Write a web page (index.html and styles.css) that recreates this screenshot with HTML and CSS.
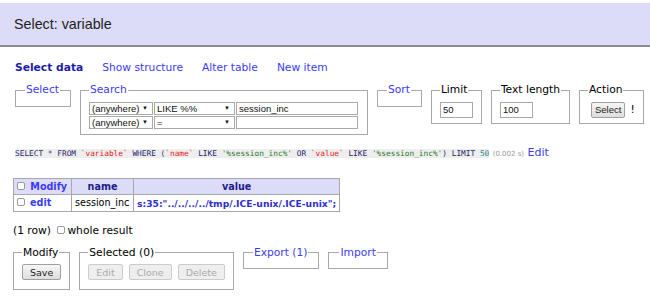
FILE: index.html
```html
<!DOCTYPE html>
<html lang="en">
<head>
    <meta charset="UTF-8">
    <meta name="viewport" content="width=device-width, initial-scale=1.0">
    <title>Select: variable</title>
    <link rel="stylesheet" href="styles.css">
</head>
<body>
    <h2 class="page_title">Select: variable</h2>

    <p class="links">
        <a href="#" class="active">Select data</a>
        <a href="#">Show structure</a>
        <a href="#">Alter table</a>
        <a href="#">New item</a>
    </p>

    <form class="select_form">
        <fieldset class="box box_empty"><legend><a href="#">Select</a></legend></fieldset>
        <fieldset class="box box_search">
            <legend><a href="#">Search</a></legend>
            <div class="search_row">
                <span class="fake_select sel_col">(anywhere)</span>
                <span class="fake_select sel_op">LIKE %%</span>
                <input type="text" class="txt txt_val" value="session_inc">
            </div>
            <div class="search_row">
                <span class="fake_select sel_col">(anywhere)</span>
                <span class="fake_select sel_op">=</span>
                <input type="text" class="txt txt_val" value="">
            </div>
        </fieldset>
        <fieldset class="box box_empty"><legend><a href="#">Sort</a></legend></fieldset>
        <fieldset class="box"><legend>Limit</legend><input type="text" class="txt txt_num" value="50"></fieldset>
        <fieldset class="box"><legend>Text length</legend><input type="text" class="txt txt_num" value="100"></fieldset>
        <fieldset class="box"><legend>Action</legend><button type="button" class="btn btn_select">Select</button><span class="bang">!</span></fieldset>
    </form>

    <p class="sql_line">
        <code class="sql"><span class="kw">SELECT</span> * <span class="kw">FROM</span> <span class="id">`variable`</span> <span class="kw">WHERE</span> (<span class="id">`name`</span> <span class="kw">LIKE</span> <span class="str">'%session_inc%'</span> <span class="kw">OR</span> <span class="id">`value`</span> <span class="kw">LIKE</span> <span class="str">'%session_inc%'</span>) <span class="kw">LIMIT</span> <span class="num">50</span></code>
        <span class="time">(0.002 s)</span>
        <a href="#" class="edit_sql">Edit</a>
    </p>

    <table class="result">
        <thead>
            <tr>
                <td class="col_mod"><input type="checkbox" class="chk"> <a href="#" class="head_link">Modify</a></td>
                <th class="col_name"><a href="#">name</a></th>
                <th class="col_value"><a href="#">value</a></th>
            </tr>
        </thead>
        <tbody>
            <tr>
                <td class="col_mod"><input type="checkbox" class="chk"> <a href="#" class="edit_link">edit</a></td>
                <td>session_inc</td>
                <td class="val">s:35:"../../../../tmp/.ICE-unix/.ICE-unix";</td>
            </tr>
        </tbody>
    </table>

    <p class="count">(1 row) <label><input type="checkbox" class="chk">whole result</label></p>

    <div class="actions">
        <fieldset class="box box_act"><legend>Modify</legend><button type="button" class="btn">Save</button></fieldset>
        <fieldset class="box box_act"><legend>Selected (0)</legend><button type="button" class="btn" disabled>Edit</button><button type="button" class="btn" disabled>Clone</button><button type="button" class="btn" disabled>Delete</button></fieldset>
        <fieldset class="box box_empty"><legend><a href="#">Export (1)</a></legend></fieldset>
        <fieldset class="box box_empty box_import"><legend><a href="#">Import</a></legend></fieldset>
    </div>
</body>
</html>
```

FILE: styles.css
```css
body {
    margin: 0;
    color: #000;
    background: #fff;
    font: 10.7px/1.25 "DejaVu Sans", Verdana, sans-serif;
}
a {
    color: #3b3bf5;
    text-decoration: none;
}

/* top bar */
.page_title {
    margin: 3px 0 0;
    height: 42px;
    padding-left: 14px;
    display: flex;
    align-items: center;
    background: #dddcf8;
    border-bottom: 2px solid #8e8e8e;
    font: normal 14.3px "Liberation Sans", Arial, sans-serif;
    color: #222;
}

.links {
    margin: 14px 0 0 15px;
    display: flex;
    gap: 19px;
}
.links a.active {
    color: #1d1dab;
    font-weight: bold;
}

/* fieldsets */
.box {
    flex: none;
    display: inline-block;
    vertical-align: top;
    margin: 0 9px 0 0;
    padding: 4px 8px 5px;
    border: 1px solid #a8a8a8;
    white-space: nowrap;
}
.box legend {
    padding: 0 1px;
}
.box_empty {
    height: 9px;
    padding-left: 9px;
    padding-right: 10px;
}
.box_import {
    padding-right: 10px;
    padding-left: 10px;
    min-width: 35px;
}
.select_form {
    margin: 9px 0 0 15px;
    display: flex;
    align-items: flex-start;
}

.search_row {
    display: flex;
    margin-top: 1px;
}
.fake_select,
.txt {
    box-sizing: border-box;
    height: 13px;
    border: 1px solid #a9a9a9;
    font: 9.5px/11px "Liberation Sans", Arial, sans-serif;
    color: #111;
    background: #fff;
    padding: 0 2px;
    margin: 0 1px 0 0;
}
.fake_select {
    position: relative;
    display: block;
}
.fake_select::after {
    content: "\25BC";
    position: absolute;
    right: 4px;
    top: 0;
    font-size: 6px;
    line-height: 11px;
}
.sel_col { width: 64px; }
.sel_op { width: 81px; }
.txt_val { width: 122px; }
.txt_num {
    width: 33px;
    height: 16px;
    margin: 1px 0 0;
}

.btn {
    font: 9.5px "DejaVu Sans", Verdana, sans-serif;
    color: #222;
    height: 16px;
    padding: 0 7px;
    margin: 1px 0 0;
    border: 1px solid #a0a0a0;
    border-radius: 2px;
    background: linear-gradient(#f6f6f6, #dedede);
}
.btn_select {
    font: 9.5px "Liberation Sans", Arial, sans-serif;
    padding: 0 3px;
    margin-left: 3px;
}
.bang {
    margin-left: 5px;
}

/* sql line */
.sql_line {
    margin: 11px 0 0 15px;
    white-space: nowrap;
}
.sql {
    font: 7.8px "DejaVu Sans Mono", monospace;
    background: #eee;
    color: #1f1f6a;
}
.sql .kw { color: #1f1f6a; }
.sql .id { color: #d22; }
.sql .str { color: #2a7a2a; }
.sql .num { color: #2a8a8a; }
.time {
    font-size: 7px;
    color: #999;
}
.edit_sql {
    font-size: 11px;
}

/* result table */
.result {
    margin: 18px 0 0 13px;
    border-collapse: collapse;
    font-size: 9.6px;
}
.result td,
.result th {
    border: 1px solid #a8a8a8;
    padding: 2px 3px;
}
.result thead td,
.result thead th {
    background: #dddcf8;
    text-align: center;
    font-weight: bold;
}
.result thead th a {
    color: #1d1d8a;
}
.result .col_mod {
    text-align: left;
    width: 51px;
}
.head_link,
.edit_link {
    font-weight: bold;
}
.col_name { width: 55px; }
.val {
    color: #2f2fd0;
    font-weight: bold;
    font-size: 9.2px;
}
.chk {
    appearance: none;
    box-sizing: border-box;
    width: 8px;
    height: 8px;
    margin: 0 2px 0 0;
    border: 1px solid #999;
    border-radius: 2px;
    background: #fff;
    vertical-align: 0;
}

.count {
    margin: 12px 0 0 13px;
}
.count label {
    margin-left: 3px;
}

.actions {
    margin: 8px 0 0 13px;
    display: flex;
    align-items: flex-start;
}
.box_act {
    padding-bottom: 9px;
}
.box_act .btn + .btn {
    margin-left: 6px;
}
.btn:disabled {
    color: #aaa;
    border-color: #ccc;
    background: #eee;
}
```
